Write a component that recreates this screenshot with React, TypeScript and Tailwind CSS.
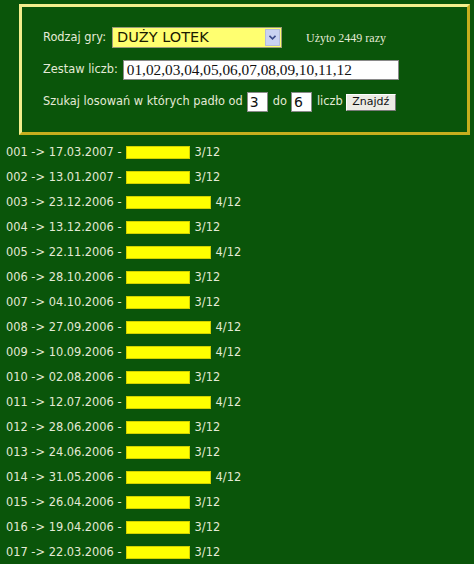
const draws: [string, string, number][] = [
  ["001", "17.03.2007", 3],
  ["002", "13.01.2007", 3],
  ["003", "23.12.2006", 4],
  ["004", "13.12.2006", 3],
  ["005", "22.11.2006", 4],
  ["006", "28.10.2006", 3],
  ["007", "04.10.2006", 3],
  ["008", "27.09.2006", 4],
  ["009", "10.09.2006", 4],
  ["010", "02.08.2006", 3],
  ["011", "12.07.2006", 4],
  ["012", "28.06.2006", 3],
  ["013", "24.06.2006", 3],
  ["014", "31.05.2006", 4],
  ["015", "26.04.2006", 3],
  ["016", "19.04.2006", 3],
  ["017", "22.03.2006", 3],
];

function SearchForm() {
  return (
    <div className="ml-[19px] mt-[4px] w-[451px] border-[3px] border-t-[#f2ee8c] border-l-[#f2ee8c] border-r-[#c6ae1e] border-b-[#c6ae1e] bg-[#0a550a] pl-[21px] pt-[20px] pb-[20px]">
      {/* Game type */}
      <div className="flex h-[21px] items-center">
        <span>Rodzaj gry:</span>
        <div className="ml-[6px] flex h-[21px] w-[170px] items-center border border-[#9a9a7a] bg-[#ffff70] pl-[4px] text-[14.5px] text-[#1a1a00]">
          <span className="flex-1">DUŻY LOTEK</span>
          <span className="mr-[1px] flex h-[17px] w-[15px] items-center justify-center border border-[#b4bcdc] bg-[#c9d2f2]">
            <svg width="7" height="5" viewBox="0 0 7 5">
              <path d="M0.5 0.8 L3.5 3.8 L6.5 0.8" fill="none" stroke="#3a4a8a" strokeWidth="1.6" />
            </svg>
          </span>
        </div>
        <span className="ml-[24px] font-['Liberation_Serif',serif] text-[12px]">Użyto 2449 razy</span>
      </div>

      {/* Number set */}
      <div className="mt-[12px] flex h-[20px] items-center">
        <span>Zestaw liczb:</span>
        <div className="ml-[5px] flex h-[20px] w-[276px] items-center border border-[#8a8a8a] bg-white pl-[3px] font-['Liberation_Serif',serif] text-[15.3px] text-[#111]">
          01,02,03,04,05,06,07,08,09,10,11,12
        </div>
      </div>

      {/* Range */}
      <div className="mt-[12px] flex h-[20px] items-center">
        <span>Szukaj losowań w których padło od</span>
        <div className="ml-[4px] flex h-[20px] w-[21px] items-center border border-[#8a8a8a] bg-white pl-[2px] text-[14px] text-[#111]">3</div>
        <span className="ml-[5px]">do</span>
        <div className="ml-[4px] flex h-[20px] w-[21px] items-center border border-[#8a8a8a] bg-white pl-[2px] text-[14px] text-[#111]">6</div>
        <span className="ml-[5px]">liczb</span>
        <button className="ml-[3px] flex h-[17px] w-[50px] items-center justify-center border border-t-[#ffffff] border-l-[#ffffff] border-r-[#7a7a7a] border-b-[#7a7a7a] bg-[#ecebe4] text-[11px] text-[#111]">
          Znajdź
        </button>
      </div>
    </div>
  );
}

export default function App() {
  return (
    <div className="min-h-[564px] overflow-hidden bg-[#0a550a] font-['DejaVu_Sans',sans-serif] text-[11.4px] text-[#e4ead6]">
      <SearchForm />

      <div className="mt-[5px] pl-[6px]">
        {draws.map(([no, date, hits]) => (
          <div key={no} className="flex h-[25px] items-center whitespace-pre">
            <span>{`${no} -> ${date} -`}</span>
            <span
              className="ml-[4px] h-[13px] border border-[#d4d000] bg-[#ffff00]"
              style={{ width: Math.round((hits / 12) * 256) }}
            />
            <span className="ml-[5px]">{hits}/12</span>
          </div>
        ))}
      </div>
    </div>
  );
}
